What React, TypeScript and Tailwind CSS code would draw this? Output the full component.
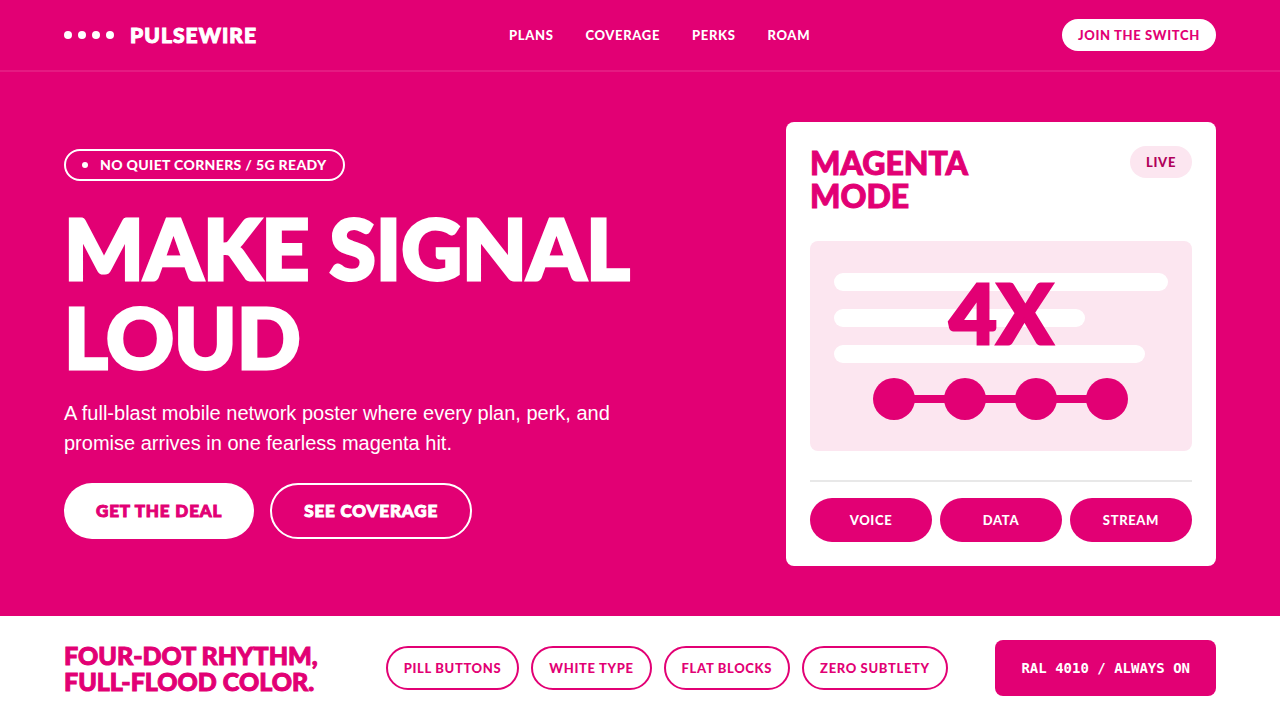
const display = "font-['Lato',sans-serif] font-black uppercase";
const label = `${display} text-[13px] leading-4 tracking-wider`;
const heavy = "[-webkit-text-stroke:1px_currentColor]";
const poster = "[-webkit-text-stroke:3px_currentColor]";

const navLinks = ["Plans", "Coverage", "Perks", "Roam"];
const services = ["Voice", "Data", "Stream"];
const traits = ["Pill buttons", "White type", "Flat blocks", "Zero subtlety"];
const barWidths = ["w-full", "w-3/4", "w-[93%]"];

function Header() {
  return (
    <header className="flex h-18 items-center justify-between border-b-2 border-white/10 px-16">
      <a href="#" className="flex items-center gap-4">
        <span className="flex gap-1.5" aria-hidden="true">
          {[0, 1, 2, 3].map((dot) => (
            <span key={dot} className="size-2 rounded-full bg-white" />
          ))}
        </span>
        <span className={`${display} ${heavy} text-[21px] leading-6 tracking-wider`}>
          Pulsewire
        </span>
      </a>
      <nav className="flex gap-8">
        {navLinks.map((link) => (
          <a key={link} href="#" className={label}>
            {link}
          </a>
        ))}
      </nav>
      <button className={`${label} h-8 rounded-full bg-white px-4 text-[#e20074]`}>
        Join the switch
      </button>
    </header>
  );
}

function Intro() {
  return (
    <div className="flex flex-col items-start">
      <p
        className={`${display} flex h-8 items-center gap-3 rounded-full border-2 border-white px-4 text-sm leading-4 tracking-wide`}
      >
        <span className="size-1.5 rounded-full bg-white" />
        No quiet corners / 5G ready
      </p>
      <h1 className={`${display} ${poster} mt-[22px] text-[84px] leading-[89px]`}>
        Make signal
        <br />
        loud
      </h1>
      <p className="mt-[17px] max-w-[580px] font-['Liberation_Sans',sans-serif] text-xl leading-[30px]">
        A full-blast mobile network poster where every plan, perk, and promise arrives in one
        fearless magenta hit.
      </p>
      <div className="mt-[25px] flex gap-4">
        <button
          className={`${display} ${heavy} h-14 rounded-full bg-white px-8 text-[17px] tracking-wider text-[#e20074]`}
        >
          Get the deal
        </button>
        <button
          className={`${display} ${heavy} h-14 rounded-full border-2 border-white px-8 text-[17px] tracking-wider`}
        >
          See coverage
        </button>
      </div>
    </div>
  );
}

function SignalCard() {
  return (
    <article className="flex min-h-[444px] w-[430px] shrink-0 flex-col justify-between rounded-lg bg-white p-6 text-[#e20074]">
      <div className="flex items-start justify-between">
        <h2 className={`${display} ${heavy} text-[32px] leading-[33px]`}>
          Magenta
          <br />
          mode
        </h2>
        <span
          className={`${label} flex h-8 items-center rounded-full bg-[#fce6f0] px-4 text-[#b0005a]`}
        >
          Live
        </span>
      </div>

      <div className="relative rounded-lg bg-[#fce6f0] px-6 pt-8 pb-[31px]">
        <div className="flex flex-col gap-[18px]">
          {barWidths.map((width) => (
            <div key={width} className={`h-[18px] rounded-full bg-white ${width}`} />
          ))}
        </div>
        <strong
          className={`${display} ${poster} absolute inset-x-0 top-[30px] text-center text-[82px] leading-[82px]`}
        >
          4X
        </strong>
        <svg viewBox="0 0 256 42" className="mx-auto mt-[15px] h-[42px] w-64" aria-hidden="true">
          <path d="M21 21H235" stroke="#e20074" strokeWidth="8" />
          {[21, 92, 163, 234].map((cx) => (
            <circle key={cx} cx={cx} cy="21" r="21" fill="#e20074" />
          ))}
        </svg>
      </div>

      <div className="grid grid-cols-3 gap-2 border-t-2 border-[#e8e8e8] pt-4">
        {services.map((service) => (
          <button key={service} className={`${label} h-11 rounded-full bg-[#e20074] text-white`}>
            {service}
          </button>
        ))}
      </div>
    </article>
  );
}

function Footer() {
  return (
    <footer className="flex items-center justify-between bg-white px-16 py-6 text-[#e20074]">
      <p className={`${display} ${heavy} min-w-[274px] text-[25px] leading-[26px]`}>
        Four-dot rhythm,
        <br />
        full-flood color.
      </p>
      <ul className="flex gap-3">
        {traits.map((trait) => (
          <li
            key={trait}
            className={`${label} flex h-11 items-center rounded-full border-2 border-[#e20074] px-4`}
          >
            {trait}
          </li>
        ))}
      </ul>
      <p className="flex h-14 items-center rounded-lg bg-[#e20074] px-[26px] font-['DejaVu_Sans_Mono',monospace] text-sm font-bold text-white">
        RAL 4010 / ALWAYS ON
      </p>
    </footer>
  );
}

export default function App() {
  return (
    <div className="flex min-h-screen flex-col bg-[#e20074] text-white">
      <Header />
      <main className="flex flex-1 items-center justify-between px-16">
        <Intro />
        <SignalCard />
      </main>
      <Footer />
    </div>
  );
}
